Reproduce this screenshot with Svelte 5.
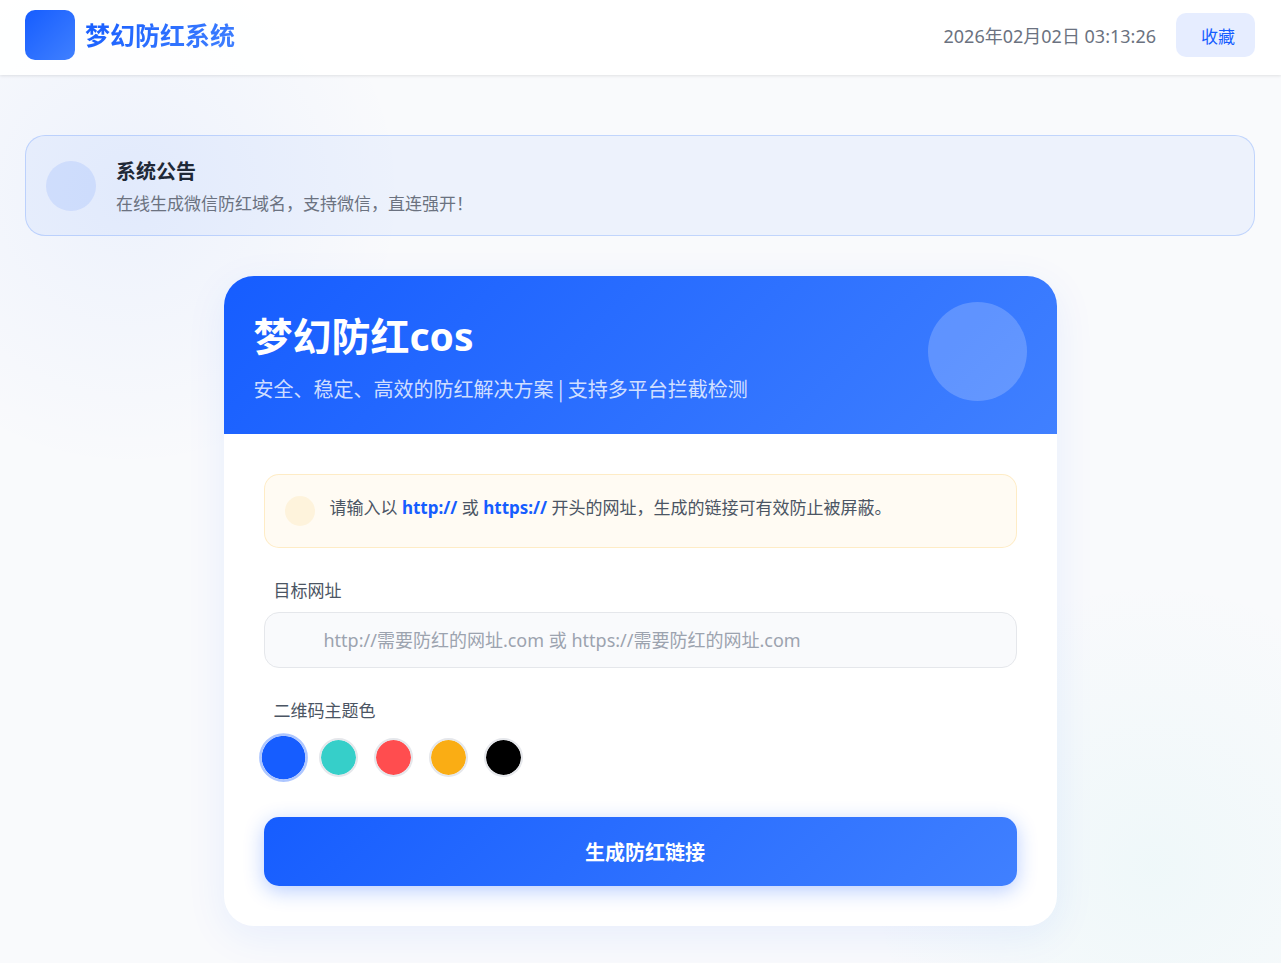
<script>
  const now = '2026年02月02日 03:13:26';

  const colors = [
    { value: '#165dff', name: '蓝色' },
    { value: '#36cfc9', name: '青色' },
    { value: '#ff4d4f', name: '红色' },
    { value: '#faad14', name: '橙色' },
    { value: '#000000', name: '黑色' }
  ];

  let url = $state('');
  let color = $state('#165dff');
</script>

<header>
  <div class="brand">
    <div class="brand-icon"></div>
    <span class="brand-name">梦幻防红系统</span>
  </div>
  <div class="header-right">
    <time>{now}</time>
    <button class="fav" type="button">收藏</button>
  </div>
</header>

<main>
  <section class="notice">
    <div class="notice-icon"></div>
    <div class="notice-text">
      <h2>系统公告</h2>
      <p>在线生成微信防红域名，支持微信，直连强开！</p>
    </div>
  </section>

  <section class="card">
    <div class="card-header">
      <div class="card-title">
        <h1>梦幻防红cos</h1>
        <p>安全、稳定、高效的防红解决方案 | 支持多平台拦截检测</p>
      </div>
      <div class="card-icon"></div>
    </div>

    <form class="card-body" onsubmit={(e) => e.preventDefault()}>
      <div class="tip">
        <div class="tip-icon"></div>
        <p>请输入以 <strong>http://</strong> 或 <strong>https://</strong> 开头的网址，生成的链接可有效防止被屏蔽。</p>
      </div>

      <label class="field-label" for="url">目标网址</label>
      <input
        class="url"
        id="url"
        type="text"
        bind:value={url}
        placeholder="http://需要防红的网址.com 或 https://需要防红的网址.com"
      />

      <fieldset>
        <legend class="field-label">二维码主题色</legend>
        <div class="colors">
          {#each colors as c}
            <input
              type="radio"
              name="color"
              value={c.value}
              bind:group={color}
              aria-label={c.name}
              style="background-color: {c.value}"
            />
          {/each}
        </div>
      </fieldset>

      <button class="submit" type="submit">生成防红链接</button>
    </form>
  </section>
</main>

<style>
  :global(body) {
    margin: 0;
    min-height: 100vh;
    color: #1f2937;
    font-family: "Noto Sans", "Noto Sans CJK SC", sans-serif;
    font-size: 17px;
    background:
      radial-gradient(circle at 10% 20%, rgba(22, 93, 255, 0.05) 0%, transparent 20%),
      radial-gradient(circle at 90% 90%, rgba(54, 207, 201, 0.05) 0%, transparent 20%),
      #f9fafc;
  }

  h1, h2, p {
    margin: 0;
  }

  button, input {
    font-family: inherit;
    box-sizing: border-box;
  }

  header {
    display: flex;
    align-items: center;
    justify-content: space-between;
    height: 75px;
    padding: 0 26px 5px 25px;
    box-sizing: border-box;
    background: rgba(255, 255, 255, 0.9);
    box-shadow: 0 1px 3px rgba(0, 0, 0, 0.1);
  }

  .brand {
    display: flex;
    align-items: center;
    gap: 10px;
  }

  .brand-icon {
    width: 50px;
    height: 50px;
    border-radius: 10px;
    background: linear-gradient(135deg, #165dff, #4080ff);
  }

  .brand-name {
    font-size: 25px;
    line-height: 38px;
    font-weight: 700;
    color: transparent;
    background: linear-gradient(135deg, #165dff, #4080ff);
    background-clip: text;
  }

  .header-right {
    display: flex;
    align-items: center;
    gap: 20px;
  }

  time {
    font-size: 18px;
    color: #6b7280;
  }

  .fav {
    height: 44px;
    padding: 0 20px 0 25px;
    border: 0;
    border-radius: 10px;
    font-size: 17px;
    color: #165dff;
    background: #e6edff;
    cursor: pointer;
  }

  main {
    padding: 60px 26px 37px 25px;
  }

  .notice {
    display: flex;
    align-items: center;
    gap: 20px;
    min-height: 101px;
    box-sizing: border-box;
    padding: 0 20px;
    margin-bottom: 40px;
    border: 1px solid rgba(22, 93, 255, 0.2);
    border-radius: 20px;
    background: rgba(22, 93, 255, 0.05);
  }

  .notice-icon {
    flex: none;
    width: 50px;
    height: 50px;
    border-radius: 50%;
    background: rgba(22, 93, 255, 0.1);
  }

  .notice-text {
    padding-top: 4px;
  }

  .notice h2 {
    font-size: 20px;
    line-height: 32px;
    font-weight: 700;
  }

  .notice p {
    line-height: 32px;
    color: #6b7280;
  }

  .card {
    max-width: 833px;
    margin: 0 auto;
    border-radius: 30px;
    overflow: hidden;
    background: #fff;
    box-shadow: 0 10px 40px rgba(22, 93, 255, 0.08);
  }

  .card-header {
    display: flex;
    align-items: center;
    justify-content: space-between;
    min-height: 158px;
    padding: 0 30px;
    color: #fff;
    background: linear-gradient(135deg, #165dff, #4080ff);
  }

  .card-title {
    padding-top: 12px;
  }

  h1 {
    font-size: 39px;
    line-height: 56px;
    font-weight: 700;
  }

  .card-header p {
    font-family: "Noto Sans CJK SC", sans-serif;
    font-size: 20px;
    line-height: 50px;
    color: rgba(255, 255, 255, 0.8);
  }

  .card-icon {
    flex: none;
    width: 99px;
    height: 99px;
    margin-bottom: 8px;
    border-radius: 50%;
    background: rgba(255, 255, 255, 0.2);
  }

  .card-body {
    padding: 40px;
  }

  .tip {
    display: flex;
    align-items: center;
    gap: 15px;
    min-height: 74px;
    box-sizing: border-box;
    padding: 0 20px;
    margin-bottom: 30px;
    border: 1px solid rgba(250, 173, 20, 0.2);
    border-radius: 15px;
    background: rgba(250, 173, 20, 0.05);
  }

  .tip-icon {
    flex: none;
    width: 30px;
    height: 30px;
    border-radius: 50%;
    background: rgba(250, 173, 20, 0.1);
  }

  .tip p {
    padding-bottom: 6px;
    line-height: 28px;
    color: #4b5563;
  }

  .tip strong {
    color: #165dff;
  }

  .field-label {
    display: block;
    padding: 0 10px;
    margin-bottom: 8px;
    line-height: 26px;
    color: #4b5563;
  }

  .url {
    display: block;
    width: 100%;
    height: 56px;
    padding: 0 20px 0 59px;
    margin-bottom: 30px;
    border: 1px solid #e5e7eb;
    border-radius: 15px;
    font-size: 18px;
    color: #1f2937;
    background: #f9fafc;
  }

  .url::placeholder {
    color: #9ca3af;
  }

  fieldset {
    min-width: 0;
    padding: 0;
    margin: 0 0 40px;
    border: 0;
  }

  .colors {
    display: flex;
    flex-wrap: wrap;
    gap: 16px;
    padding-top: 6px;
  }

  .colors input {
    appearance: none;
    width: 39px;
    height: 39px;
    margin: 0;
    border: 2px solid #e5e7eb;
    border-radius: 50%;
    background-clip: padding-box;
    cursor: pointer;
  }

  .colors input:checked {
    border-color: #adc6ff;
    transform: scale(1.25);
  }

  .submit {
    display: block;
    width: 100%;
    height: 69px;
    padding: 0 0 0 10px;
    border: 0;
    border-radius: 15px;
    font-size: 20px;
    font-weight: 700;
    color: #fff;
    background: linear-gradient(135deg, #165dff, #4080ff);
    box-shadow: 0 5px 20px rgba(22, 93, 255, 0.3);
    cursor: pointer;
  }
</style>
